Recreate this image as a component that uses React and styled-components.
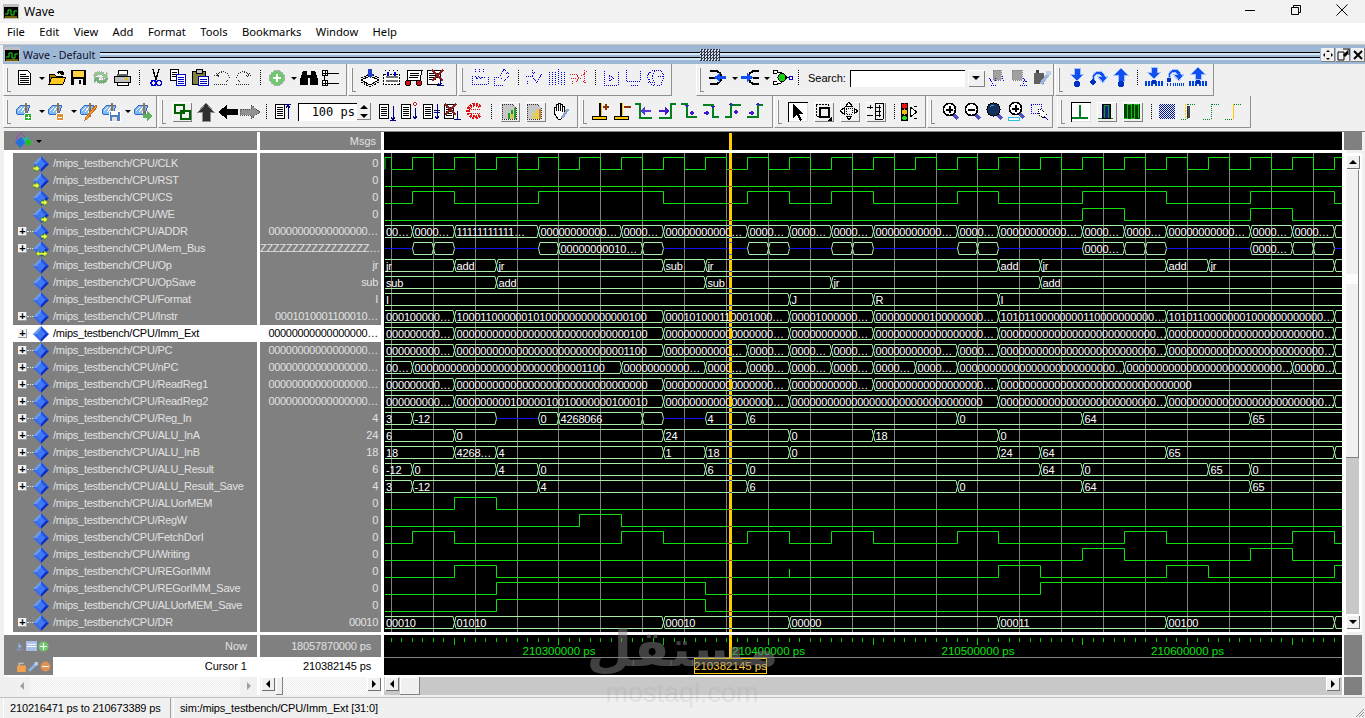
import React from 'react';
import styled, {createGlobalStyle} from 'styled-components';

const FONT = `"Liberation Sans", Arial, sans-serif`;
const UI_FONT = `"Noto Sans", "Open Sans", sans-serif`;

const Global = createGlobalStyle`
	html, body {
		margin: 0;
		padding: 0;
		background: #f0f0f0;
		overflow: hidden;
	}
`;

/* ---------- wave data, t is in half clock periods ---------- */

const END = 45.3;
const START = -0.3;
const tx = t => 391.35 + 20.95 * t;
const px = t => Math.floor(tx(t)) + 0.5;
const z = n => '0'.repeat(n) + '…';
const Z32 = '0'.repeat(32);

const clock = [];
for (let t = -1; t < 46; t += 2) {
	clock.push([Math.max(t, START), Math.min(t + 1, END)]);
}

const SIGNALS = [
	{name: 'CLK', value: '0', dir: 'in', high: clock},
	{name: 'RST', value: '0', dir: 'in', high: []},
	{name: 'CS', value: '0', dir: 'out', high: [[1, 3], [7, 13], [17, 19], [21, 23], [27, 29], [33, 37], [41, 45]]},
	{name: 'WE', value: '0', dir: 'out', high: [[33, 35], [41, 43]]},
	{name: 'ADDR', value: z(17), dir: 'out', open: true, bus: [
		[START, 1, z(2)], [1, 3, z(4)], [3, 7, '11111111111…'], [7, 11, z(11)], [11, 13, z(4)], [13, 17, z(11)],
		[17, 19, z(4)], [19, 21, z(4)], [21, 23, z(4)], [23, 27, z(11)], [27, 29, z(4)], [29, 33, z(11)],
		[33, 35, z(4)], [35, 37, z(4)], [37, 41, z(11)], [41, 43, z(4)], [43, 45, z(4)], [45, END, '']
	]},
	{name: 'Mem_Bus', value: 'ZZZZZZZZZZZZZZZZZ…', dir: 'both', open: true, bus: [
		[START, 1, null], [1, 2, ''], [2, 3, ''], [3, 7, null], [7, 8, ''], [8, 12, '00000000010…'], [12, 13, ''],
		[13, 17, null], [17, 18, ''], [18, 19, ''], [19, 21, null], [21, 22, ''], [22, 23, ''], [23, 27, null],
		[27, 28, ''], [28, 29, ''], [29, 33, null], [33, 35, z(4)], [35, 36, ''], [36, 37, ''], [37, 41, null],
		[41, 43, z(4)], [43, 44, ''], [44, 45, ''], [45, END, null]
	]},
	{name: 'Op', value: 'jr', bus: [
		[START, 3, 'jr'], [3, 5, 'add'], [5, 13, 'jr'], [13, 15, 'sub'], [15, 29, 'jr'], [29, 31, 'add'],
		[31, 37, 'jr'], [37, 39, 'add'], [39, 45, 'jr'], [45, END, '']
	]},
	{name: 'OpSave', value: 'sub', bus: [
		[START, 5, 'sub'], [5, 15, 'add'], [15, 21, 'sub'], [21, 31, 'jr'], [31, END, 'add']
	]},
	{name: 'Format', value: 'I', bus: [
		[START, 19, 'I'], [19, 23, 'J'], [23, 29, 'R'], [29, END, 'I']
	]},
	{name: 'Instr', value: '0001010001100010…', open: true, bus: [
		[START, 3, '000100000…'], [3, 13, '10001100000010100000000000000100'], [13, 19, '000101000110001000…'],
		[19, 23, '00001000000…'], [23, 29, '000000000100000000…'], [29, 37, '10101100000000110000000000…'],
		[37, 45, '10101100000001000000000000…'], [45, END, '']
	]},
	{name: 'Imm_Ext', value: z(17), open: true, bus: [
		[START, 3, z(9)], [3, 13, '00000000000000000000000000000100'], [13, 19, z(18)], [19, 23, z(11)],
		[23, 29, z(18)], [29, 37, z(26)], [37, 45, z(26)], [45, END, '']
	]},
	{name: 'PC', value: z(17), open: true, bus: [
		[START, 3, z(9)], [3, 13, '00000000000000000000000000001100'], [13, 17, z(11)], [17, 19, z(4)],
		[19, 21, z(4)], [21, 23, z(4)], [23, 27, z(11)], [27, 29, z(4)], [29, 37, z(26)], [37, 45, z(26)], [45, END, '']
	]},
	{name: 'nPC', value: z(17), open: true, bus: [
		[START, 1, z(2)], [1, 11, '00000000000000000000000000001100'], [11, 15, z(11)], [15, 17, z(4)],
		[17, 19, z(4)], [19, 21, z(4)], [21, 23, z(4)], [23, 25, z(4)], [25, 27, z(4)], [27, 35, z(26)],
		[35, 43, z(26)], [43, 45, z(5)], [45, END, '']
	]},
	{name: 'ReadReg1', value: z(17), open: true, bus: [
		[START, 3, z(9)], [3, 13, Z32], [13, 19, z(18)], [19, 23, z(11)], [23, 29, z(18)], [29, END, Z32]
	]},
	{name: 'ReadReg2', value: z(17), open: true, bus: [
		[START, 3, z(9)], [3, 13, '00000000010000010010000000100010'], [13, 19, z(18)], [19, 29, Z32],
		[29, 37, z(26)], [37, 45, z(26)], [45, END, '']
	]},
	{name: 'Reg_In', value: '4', open: true, bus: [
		[START, 1, '3'], [1, 5, '-12'], [5, 7, null], [7, 8, '0'], [8, 12, '4268066'], [12, 13, ''], [13, 15, null],
		[15, 17, '4'], [17, 27, '6'], [27, 33, '0'], [33, 41, '64'], [41, END, '65']
	]},
	{name: 'ALU_InA', value: '24', open: true, bus: [
		[START, 3, '6'], [3, 13, '0'], [13, 19, '24'], [19, 23, '0'], [23, 29, '18'], [29, END, '0']
	]},
	{name: 'ALU_InB', value: '18', open: true, bus: [
		[START, 3, '18'], [3, 5, '4268…'], [5, 13, '4'], [13, 15, '1'], [15, 19, '18'], [19, 29, '0'],
		[29, 31, '24'], [31, 37, '64'], [37, 45, '65'], [45, END, '']
	]},
	{name: 'ALU_Result', value: '6', open: true, bus: [
		[START, 1, '-12'], [1, 5, '0'], [5, 7, '4'], [7, 15, '0'], [15, 17, '6'], [17, 31, '0'], [31, 33, '64'],
		[33, 39, '0'], [39, 41, '65'], [41, END, '0']
	]},
	{name: 'ALU_Result_Save', value: '4', open: true, bus: [
		[START, 1, '3'], [1, 7, '-12'], [7, 17, '4'], [17, 27, '6'], [27, 33, '0'], [33, 41, '64'], [41, END, '65']
	]},
	{name: 'ALUorMEM', value: '0', high: [[3, 5]]},
	{name: 'RegW', value: '0', high: [[9, 11]]},
	{name: 'FetchDorI', value: '0', high: [[1, 3], [11, 13], [17, 19], [21, 23], [27, 29], [35, 37], [43, 45]]},
	{name: 'Writing', value: '0', high: [[33, 35], [41, 43]]},
	{name: 'REGorIMM', value: '0', spike: 19, high: [[3, 5], [29, 31], [37, 39], [45, END]]},
	{name: 'REGorIMM_Save', value: '0', high: [[5, 15], [31, END]]},
	{name: 'ALUorMEM_Save', value: '0', high: [[5, 15]]},
	{name: 'DR', value: '00010', open: true, bus: [
		[START, 3, '00010'], [3, 13, '01010'], [13, 19, '00010'], [19, 29, '00000'], [29, 37, '00011'],
		[37, 45, '00100'], [45, END, '']
	]}
];

const rowY = i => 163 + 17 * i;
const GRID_T = [];
for (let t = 0; t <= 44; t += 2) {
	GRID_T.push(t);
}
const CURSOR_X = 729;
const CURSOR_T = 16.2;

/* ---------- wave drawing ---------- */

function digitalPath(high, c) {
	const lo = c + 6.5;
	const hi = c - 5.5;
	let d = `M${Math.floor(tx(START))} ${lo}`;
	high.forEach(([a, b]) => {
		const xa = a <= START ? Math.floor(tx(START)) : px(a);
		const xb = b >= END ? 1342 : px(b);
		d += `L${xa} ${lo}L${xa} ${hi}L${xb} ${hi}`;
		if (b < END) {
			d += `L${xb} ${lo}`;
		}
	});
	if (!high.length || high[high.length - 1][1] < END) {
		d += `L1342 ${lo}`;
	}
	return d;
}

function busPath(a, b, c) {
	const top = c - 5.5;
	const bot = c + 6.5;
	const mid = c + 0.5;
	const xa = a <= START ? 385 : px(a);
	const xb = b >= END ? 1342 : px(b);
	const left = a <= START ? `M${xa} ${top}` : `M${xa} ${mid}L${xa + 1.5} ${top}`;
	const right = b >= END ? `L${xb} ${top}M${xb} ${bot}` : `L${xb - 1.5} ${top}L${xb} ${mid}L${xb - 1.5} ${bot}`;
	const close = a <= START ? `L${xa} ${bot}` : `L${xa + 1.5} ${bot}L${xa} ${mid}`;
	return left + right + close;
}

const Signal = ({signal, index}) => {
	const c = rowY(index);
	if (signal.bus) {
		return (
			<g>
				{signal.bus.map(([a, b, text]) => (text === null ? (
					<BlueLine key={a} d={`M${a <= START ? 385 : px(a)} ${c + 0.5}L${b >= END ? 1342 : px(b)} ${c + 0.5}`}/>
				) : (
					<g key={a}>
						<BusLine d={busPath(a, b, c)}/>
						{text ? <BusText x={(a <= START ? 384 : px(a)) + 2} y={c + 5}>{text}</BusText> : null}
					</g>
				)))}
			</g>
		);
	}
	return (
		<g>
			<DigitalLine d={digitalPath(signal.high, c)}/>
			{signal.spike ? <DigitalLine d={`M${px(signal.spike)} ${c + 6}V${c - 2}`}/> : null}
		</g>
	);
};

/* little marks where the signals cross the cursor */
const CursorMarks = () => (
	<g>
		{SIGNALS.map((s, i) => {
			const c = rowY(i);
			if (s.bus) {
				return (
					<g key={s.name}>
						<rect x={CURSOR_X} y={c - 6} width="3" height="1" fill="#4060e0"/>
						<rect x={CURSOR_X} y={c + 6} width="3" height="1" fill="#4060e0"/>
					</g>
				);
			}
			const on = s.high.some(([a, b]) => a <= CURSOR_T && CURSOR_T < b);
			return <rect key={s.name} x={CURSOR_X} y={on ? c - 6 : c + 6} width="3" height="1" fill="#f02020"/>;
		})}
	</g>
);

const Ticks = () => {
	const marks = [];
	for (let n = -1; n < 92; n++) {
		const t = n / 2;
		const major = n % 10 === 6;
		marks.push(<rect key={n} x={Math.floor(tx(t))} y="638" width="1" height={major ? 7 : 4} fill="#00d000"/>);
	}
	return marks;
};

/* ---------- toolbar icons ---------- */

const dot = {fill: 'none', stroke: '#0000e0', strokeDasharray: '1 1'};
const grayDot = {fill: 'none', stroke: '#303030', strokeDasharray: '1 1'};

const WaveBase = () => (
	<>
		<path d="M2 9l5-5h9l-3 9H3z" fill="#80b8f0" stroke="#2a6ad0"/>
		<path d="M4 10l4-4M7 11l4-5M10 12l3-5" stroke="#fff"/>
		<path d="M12 2v14" stroke="#a07030" strokeWidth="2"/>
	</>
);

const Lines = ({x = 0}) => (
	<>
		<path d={`M${x + 3.5} 3.5h9v14h-9z`} fill="#fff" stroke="#000"/>
		<path d={`M${x + 5} 6h6M${x + 5} 8h6M${x + 5} 10h6M${x + 5} 12h6M${x + 5} 14h6`} stroke="#000"/>
	</>
);

const Glass = ({inner}) => (
	<>
		<path d="M12 13l5 5" stroke="#5050c0" strokeWidth="3"/>
		<circle cx="8.5" cy="8.5" r="6" fill="#fff" stroke="#000" strokeWidth="1.6"/>
		{inner}
	</>
);

const ICONS = {
	doc: (
		<>
			<path d="M4.5 3.5h9l3 3v11h-12z" fill="#fff" stroke="#000"/>
			<path d="M6 7h6M6 9h9M6 11h9M6 13h9M6 15h9" stroke="#000"/>
		</>
	),
	open: (
		<>
			<path d="M3 17V7h5l2 2h6v8z" fill="#b08000" stroke="#000"/>
			<path d="M3 17l3-7h14l-3 7z" fill="#ffc820" stroke="#000"/>
			<path d="M11 5c2-2 5-2 6 0l1-1v4h-4l1-1c-1-1-2-1-3 0" fill="#000"/>
		</>
	),
	save: (
		<>
			<rect x="3" y="3" width="15" height="15" fill="#000"/>
			<rect x="5" y="4" width="11" height="6" fill="#ffd040"/>
			<rect x="6" y="12" width="9" height="6" fill="#f0f0f0"/>
			<rect x="11" y="13" width="2" height="4" fill="#000"/>
		</>
	),
	reload: (
		<>
			<path d="M3 9c2-5 9-6 12-2l2-2v6h-6l2-2c-2-2-6-2-8 2z" fill="#90c890" stroke="#b0b0b0" strokeDasharray="1 1"/>
			<path d="M18 12c-2 5-9 6-12 2l-2 2v-6h6l-2 2c2 2 6 2 8-2z" fill="#70b070" stroke="#b0b0b0" strokeDasharray="1 1"/>
		</>
	),
	print: (
		<>
			<path d="M6 3.5h9v5H6z" fill="#fff" stroke="#000"/>
			<path d="M2.5 9.5h16v6h-16z" fill="#c0c0c0" stroke="#000"/>
			<path d="M5 15.5h11v3H5z" fill="#fff" stroke="#000"/>
			<path d="M5 7h11v2H5z" fill="#606060"/>
			<rect x="13" y="11" width="3" height="2" fill="#e0c020"/>
		</>
	),
	cut: (
		<>
			<path d="M8 2l3 11M14 2l-3 11" stroke="#000" strokeWidth="1.4" fill="none"/>
			<circle cx="8.5" cy="16" r="2.5" fill="none" stroke="#0000d0" strokeWidth="1.4"/>
			<circle cx="14" cy="16" r="2.5" fill="none" stroke="#0000d0" strokeWidth="1.4"/>
		</>
	),
	copy: (
		<>
			<path d="M3.5 2.5h8v11h-8z" fill="#fff" stroke="#000"/>
			<path d="M5 5h5M5 7h5M5 9h5" stroke="#000"/>
			<path d="M9.5 7.5h9v11h-9z" fill="#fff" stroke="#0000c0"/>
			<path d="M11 10h6M11 12h6M11 14h6M11 16h6" stroke="#0000c0"/>
		</>
	),
	paste: (
		<>
			<path d="M3.5 4.5h13v13h-13z" fill="#808040" stroke="#000"/>
			<path d="M7 2.5h6v4H7z" fill="#c0c0c0" stroke="#000"/>
			<path d="M9.5 9.5h10v9h-10z" fill="#fff" stroke="#0000c0"/>
			<path d="M11 12h7M11 14h7M11 16h7" stroke="#0000c0"/>
		</>
	),
	undo: (
		<>
			<path d="M6 9c1-5 10-6 12 0 1 3-1 5-3 6" {...grayDot}/>
			<path d="M3 8h6M5 6l3 4M3 17h14" {...grayDot}/>
		</>
	),
	redo: (
		<>
			<path d="M16 9c-1-5-10-6-12 0-1 3 1 5 3 6" {...grayDot}/>
			<path d="M13 8h6M17 6l-3 4M3 17h14" {...grayDot}/>
		</>
	),
	add: (
		<>
			<circle cx="11" cy="11" r="7.5" fill="#70c870" stroke="#b0b0b0"/>
			<path d="M11 7v8M7 11h8" stroke="#fff" strokeWidth="2.4"/>
		</>
	),
	find: (
		<>
			<path d="M3 9l2-5h4v10H3zM19 9l-2-5h-4v10h6z" fill="#000"/>
			<rect x="2" y="11" width="8" height="7" fill="#000"/>
			<rect x="12" y="11" width="8" height="7" fill="#000"/>
			<rect x="9" y="8" width="4" height="3" fill="#000"/>
		</>
	),
	tree: (
		<>
			<path d="M2.5 3.5h5v5h-5zM2.5 13.5h5v5h-5z" fill="#fff" stroke="#000"/>
			<path d="M3 6h4M5 4v4M3 16h4M5 14v4M8 6h11M8 16h11M4 9v4" stroke="#000"/>
		</>
	),
	stack: (
		<>
			<path d="M2 13l9-4 9 4-9 5z" fill="#fff" stroke="#000"/>
			<path d="M2 15l9 5 9-5M2 11l9-4 9 4" fill="none" stroke="#000" strokeDasharray="2 1"/>
			<path d="M9 2h4v5h2l-4 4-4-4h2z" fill="#2040d0"/>
		</>
	),
	grid: (
		<>
			<path d="M2.5 7.5h16v10h-16z" fill="#fff" stroke="#000" strokeDasharray="2 1"/>
			<path d="M4 3v1M8 3v1M12 3v1M16 3v1" stroke="#000"/>
			<path d="M5 9h12v2H5zM5 13h12v2H5z" fill="#000" opacity=".55"/>
			<path d="M7 5v4M14 5v4" stroke="#0000d0" strokeWidth="2"/>
		</>
	),
	car: (
		<>
			<path d="M5 3.5h14l-2 10H4z" fill="#fff" stroke="#000"/>
			<path d="M7 6h9M7 8h9M6 10h9" stroke="#000"/>
			<circle cx="5" cy="16" r="2.6" fill="#d01010" stroke="#000"/>
			<circle cx="16" cy="16" r="2.6" fill="#d01010" stroke="#000"/>
		</>
	),
	docx: (
		<>
			<path d="M2.5 3.5h13v14h-13z" fill="#fff" stroke="#000"/>
			<path d="M4 6h9M4 8h9M4 10h9M4 12h7" stroke="#000"/>
			<path d="M7 3l11 11M18 3L7 14" stroke="#902020" strokeWidth="2.4"/>
			<path d="M15 12v6M12 18h7M13 16l2 2 2-2" stroke="#000080" fill="none"/>
		</>
	),
	blue1: <path d="M6 2v3M10 2v3M14 2v3M3 9v8h16V9M6 9l2 3 2-3 2 3 2-3 2 3" {...dot}/>,
	blue2: <path d="M3 10v8h9M3 10h6M13 2l6 6-6 6-4-4zM15 6l4 0" {...dot}/>,
	blue3: <path d="M2 9h6l3-5M8 9l3 5 3-3M18 7l-6 9M3 14v4M8 3v3" {...dot}/>,
	blue4: <path d="M3 5v13M6 5v13M9 5v13M12 2v16M15 5v13M18 5v13" {...dot}/>,
	blue5: <path d="M2 7h6l3 4 8-7M3 11h6M8 15l3-4 7 5M4 14v4M16 3v12" {...{...dot, stroke: '#d02020'}}/>,
	blue6: <path d="M3 4v14h14V4M8 8l5 3-5 3z" {...dot}/>,
	blue7: <path d="M3 3v11h14V3M8 18h8" {...dot}/>,
	blue8: <path d="M2 9l5-6h3l-3 6 3 9H7zM11 3h5l3 6-3 9h-5M13 9h6M3 15h6" {...dot}/>,
	combL: (
		<>
			<path d="M3 4h5a6 6 0 0 1 0 13H3M10 10.5h-8" fill="none" stroke="#000" strokeWidth="2"/>
			<path d="M19 9h-6V6l-6 4.5 6 4.5v-3h6z" fill="#1050f0"/>
		</>
	),
	combR: (
		<>
			<path d="M20 4h-4a6 6 0 0 0 0 13h4M14 10.5h6" fill="none" stroke="#000" strokeWidth="2"/>
			<path d="M2 9h6V6l6 4.5L8 15v-3H2z" fill="#1050f0"/>
		</>
	),
	chip: (
		<>
			<path d="M2.5 3.5h4v3h-4zM2.5 14.5h4v3h-4z" fill="#fff" stroke="#000"/>
			<path d="M6 5h4l6 5.5-6 5.5H6" fill="#fff" stroke="#000"/>
			<circle cx="11" cy="10.5" r="4" fill="#10d010" stroke="#000"/>
			<path d="M16 10.5h3" stroke="#000"/>
			<rect x="18" y="9" width="3" height="3" fill="#fff" stroke="#0000d0"/>
		</>
	),
	find2: (
		<>
			<path d="M6 3h8v10H6z" fill="#a0a0a0" stroke="#808080" strokeDasharray="1 1"/>
			<path d="M2 11l4 6M4 18h6M8 11v4" {...dot}/>
			<path d="M15 9l2 6" {...dot}/>
		</>
	),
	find3: (
		<>
			<path d="M3 3h10v10H3z" fill="#a0a0a0" stroke="#808080" strokeDasharray="1 1"/>
			<path d="M14 11l5 6M11 18h7M14 17v-3" {...dot}/>
		</>
	),
	tools: (
		<>
			<path d="M3 6h10v11H3z" fill="#606060"/>
			<path d="M5 3h3v3H5z" fill="#404040"/>
			<path d="M18 6l-8 11" stroke="#a0b8e0" strokeWidth="3.4"/>
			<path d="M15 4h5v4h-5z" fill="#c0d0e8"/>
		</>
	),
	down: (
		<>
			<path d="M8 1h6v6h4l-7 7-7-7h4z" fill="#1050f0" stroke="#a0c0ff"/>
			<circle cx="11" cy="17" r="3" fill="#0030c0"/>
		</>
	),
	over: (
		<>
			<path d="M4 12c0-9 11-10 13-3h3l-5 7-6-7h4c-2-3-7-2-7 3z" fill="#1050f0" stroke="#a0c0ff"/>
			<circle cx="5" cy="15" r="2.6" fill="#0030c0"/>
		</>
	),
	up: (
		<>
			<path d="M11 1l7 7h-4v6H8V8H4z" fill="#1050f0" stroke="#a0c0ff"/>
			<circle cx="11" cy="17" r="3" fill="#0030c0"/>
		</>
	),
	downB: (
		<>
			<path d="M8 0h6v5h4l-7 7-7-7h4z" fill="#1050f0" stroke="#a0c0ff"/>
			<path d="M3 14v5M6 14v5M9 14v5M13 14v5M16 14v5M19 14v5" stroke="#0040e0" strokeWidth="1.4"/>
			<circle cx="11" cy="15" r="2.4" fill="#0030c0"/>
		</>
	),
	overB: (
		<>
			<path d="M3 10c0-9 11-10 13-3h3l-5 7-6-7h4c-2-3-7-2-7 3z" fill="#1050f0" stroke="#a0c0ff"/>
			<circle cx="4" cy="13" r="2.4" fill="#0030c0"/>
			<path d="M2 16v3M5 16v3M8 16v3M10 16v3M12 16v3M14 16v3M16 16v3M18 16v3" stroke="#0040e0"/>
		</>
	),
	upB: (
		<>
			<path d="M11 0l7 7h-4v5H8V7H4z" fill="#1050f0" stroke="#a0c0ff"/>
			<path d="M3 14v5M6 14v5M9 14v5M13 14v5M16 14v5M19 14v5" stroke="#0040e0" strokeWidth="1.4"/>
			<circle cx="11" cy="15" r="2.4" fill="#0030c0"/>
		</>
	),
	waveAdd: (
		<>
			<WaveBase/>
			<circle cx="14" cy="16" r="4" fill="#30b030" stroke="#fff"/>
			<path d="M12 16h4M14 14v4" stroke="#fff"/>
		</>
	),
	waveDel: (
		<>
			<WaveBase/>
			<circle cx="14" cy="16" r="4" fill="#e09030" stroke="#fff"/>
			<path d="M12 16h4" stroke="#fff"/>
		</>
	),
	waveEdit: (
		<>
			<WaveBase/>
			<path d="M19 6L9 18l-2 1 1-3L18 4z" fill="#f0a040" stroke="#c07020"/>
		</>
	),
	waveSave: (
		<>
			<WaveBase/>
			<rect x="9" y="10" width="11" height="10" fill="#5080c0" stroke="#fff"/>
			<rect x="11" y="11" width="7" height="3" fill="#fff"/>
			<rect x="12" y="16" width="5" height="4" fill="#e0e0e0"/>
		</>
	),
	waveOut: (
		<>
			<WaveBase/>
			<path d="M11 13h4v-3l5 5-5 5v-3h-4z" fill="#60b060"/>
		</>
	),
	link: <path d="M3.5 3.5h9v8h-9zM9.5 9.5h9v8h-9z" fill="none" stroke="#006000" strokeWidth="2"/>,
	arrowUp: <path d="M11 2l8 9h-4v9H7v-9H3z" fill="#303030" stroke="#909090"/>,
	arrowLeft: <path d="M1 11l9-7v4h11v6H10v4z" fill="#000"/>,
	arrowRight: <path d="M21 11l-9-7v4H1v6h11v4z" fill="#909090" stroke="#505050" strokeDasharray="1 1"/>,
	listSpace: (
		<>
			<Lines/>
			<path d="M16 3v15M13 3h6M14 7l2-3 2 3" stroke="#000080" fill="none"/>
		</>
	),
	listDown: (
		<>
			<Lines/>
			<path d="M17 5v14M14 19h6M15 16l2 3 2-3" stroke="#000080" fill="none"/>
		</>
	),
	listRed: (
		<>
			<Lines/>
			<path d="M17 7v11M15 15l2 3 2-3" stroke="#000080" fill="none"/>
			<path d="M17 1l2 2-2 2-2-2z" fill="#fff" stroke="#d01010"/>
		</>
	),
	listBoth: (
		<>
			<Lines/>
			<path d="M17 3v15M15 15l2 3 2-3M14 9h6M14 11h6" stroke="#000080" fill="none"/>
		</>
	),
	listX: (
		<>
			<Lines x={-1}/>
			<path d="M3 3l11 11M14 3L3 14" stroke="#902020" strokeWidth="2.4"/>
			<path d="M15 10v8M12 18h7" stroke="#000080"/>
		</>
	),
	redC: (
		<>
			<path d="M16 6c-2-4-12-3-12 4s10 8 12 4" fill="none" stroke="#e01010" strokeWidth="3.6" strokeDasharray="2 1"/>
			<path d="M5 8h12M5 12h12" stroke="#e01010" strokeDasharray="1 1"/>
		</>
	),
	chartA: (
		<>
			<path d="M3 3h10l4 4v11H3z" fill="#c8c8c8" stroke="#303030" strokeDasharray="1 1"/>
			<path d="M10 18v-6M13 18V9M16 18V7" stroke="#20a020" strokeWidth="2"/>
			<path d="M13 13v5" stroke="#e0c020" strokeWidth="2"/>
		</>
	),
	chartB: (
		<>
			<path d="M2 3h11l3 4v11H2z" fill="#c8c8c8" stroke="#303030" strokeDasharray="1 1"/>
			<path d="M9 18v-6M12 18V9" stroke="#f0d020" strokeWidth="2"/>
			<path d="M15 18V8" stroke="#d08020" strokeWidth="2"/>
		</>
	),
	hand: (
		<>
			<path d="M5 12V6h2V3h2v-1h2v1h2v2h2v8l-3 5H9z" fill="#fff" stroke="#000"/>
			<path d="M7 6v4M9 3v7M11 3v7M13 5v6" stroke="#000"/>
			<path d="M19 8l-6 9" stroke="#90a8d0" strokeWidth="3"/>
		</>
	),
	cursorAdd: (
		<>
			<path d="M10 2v13" stroke="#000" strokeWidth="1.6"/>
			<path d="M2.5 15.5h14v3h-14z" fill="#ffc800" stroke="#000"/>
			<path d="M11 2v12" stroke="#ffc800"/>
			<path d="M13 6h6M16 3v6" stroke="#903000" strokeWidth="1.4"/>
		</>
	),
	cursorDel: (
		<>
			<path d="M9 2v13" stroke="#000" strokeWidth="1.6"/>
			<path d="M2.5 15.5h14v3h-14z" fill="#ffc800" stroke="#000"/>
			<path d="M10 2v12" stroke="#ffc800"/>
			<path d="M12 6h7" stroke="#903000" strokeWidth="1.4"/>
		</>
	),
	edgeA: (
		<>
			<path d="M1 3h5v14h12" fill="none" stroke="#008020" strokeWidth="1.4"/>
			<path d="M17 9h-6V6l-5 4 5 4v-3h6z" fill="#4018d0" opacity=".85"/>
		</>
	),
	edgeB: (
		<>
			<path d="M3 17h12V3h5" fill="none" stroke="#008020" strokeWidth="1.4"/>
			<path d="M3 9h6V6l5 4-5 4v-3H3z" fill="#4018d0"/>
		</>
	),
	edgeC: (
		<>
			<path d="M3 3h6v13h10" fill="none" stroke="#008020" strokeWidth="1.4"/>
			<path d="M7 4h4l-2 3zM17 12h-6l3-2zM17 12h-6l3 2z" fill="#4018d0"/>
		</>
	),
	edgeD: (
		<>
			<path d="M3 4h10v12h6" fill="none" stroke="#008020" strokeWidth="1.4"/>
			<path d="M11 5h4l-2 3zM3 12h7l-3-2zM3 12h7l-3 2z" fill="#4018d0"/>
		</>
	),
	edgeE: (
		<>
			<path d="M3 16h6V4h10" fill="none" stroke="#008020" strokeWidth="1.4"/>
			<path d="M7 4h4l-2-3zM17 11h-6l3-2zM17 11h-6l3 2z" fill="#4018d0"/>
		</>
	),
	edgeF: (
		<>
			<path d="M3 16h11V4h5" fill="none" stroke="#008020" strokeWidth="1.4"/>
			<path d="M12 4h4l-2-3zM4 12h7l-3-2zM4 12h7l-3 2z" fill="#4018d0"/>
		</>
	),
	pointer: <path d="M6 3v14l4-3 3 6 2-1-3-6h5z" fill="#000"/>,
	square: (
		<>
			<path d="M3 3h12v12H3z" fill="none" stroke="#000" strokeDasharray="2 1"/>
			<path d="M6.5 6.5h9v9h-9z" fill="none" stroke="#000" strokeWidth="2"/>
			<path d="M14 20l5-5v5z" fill="#000"/>
		</>
	),
	move: (
		<>
			<path d="M10 1l3 4H7zM10 19l3-4H7zM1 10l4-3v6zM19 10l-4-3v6z" fill="#fff" stroke="#000"/>
			<path d="M7 7h6v6H7z" fill="none" stroke="#000" strokeDasharray="1 1"/>
		</>
	),
	measure: (
		<>
			<path d="M10 2v16M18 2v16M10 2h8M10 18h8" stroke="#000" fill="none"/>
			<path d="M2 6h6M5 4v4M2 14h6M11 6h5M11 10h5M11 14h5M14 4v4M14 8v4M14 12v4" stroke="#000"/>
		</>
	),
	traffic: (
		<>
			<rect x="1" y="2" width="7" height="18" fill="#000"/>
			<circle cx="4.5" cy="5" r="2.6" fill="#f01010"/>
			<circle cx="4.5" cy="11" r="2.6" fill="#f0c010"/>
			<circle cx="4.5" cy="17" r="2.4" fill="#20e020"/>
			<path d="M10 6v10l7-5z" fill="#fff" stroke="#000"/>
			<path d="M14 5h3M14 17h3" stroke="#000"/>
		</>
	),
	zoomIn: <Glass inner={<path d="M5 8.5h7M8.5 5v7" stroke="#000" strokeWidth="2"/>}/>,
	zoomOut: <Glass inner={<path d="M5 8.5h7" stroke="#000" strokeWidth="2"/>}/>,
	zoomFull: (
		<>
			<path d="M12 13l5 5" stroke="#5050c0" strokeWidth="3"/>
			<circle cx="8.5" cy="8.5" r="6.6" fill="#103060" stroke="#000"/>
			<path d="M5 6c1-2 3-2 4-2" stroke="#6090d0" fill="none"/>
		</>
	),
	zoomCur: (
		<>
			<path d="M12 12l5 5" stroke="#5050c0" strokeWidth="3"/>
			<circle cx="8.5" cy="7.5" r="6" fill="#fff" stroke="#000" strokeWidth="1.6"/>
			<path d="M5 7.5h7M8.5 4v7" stroke="#000" strokeWidth="2"/>
			<rect x="1.5" y="16.5" width="11" height="3" fill="#fff" stroke="#30c0e0"/>
		</>
	),
	zoomArea: (
		<>
			<path d="M2 3h10v9H2z" {...dot}/>
			<path d="M9 8l4 1 5 5-3 3-4-2-2-5z" fill="#fff" stroke="#000" strokeDasharray="1 1"/>
			<path d="M15 15l4 4" stroke="#0000d0"/>
		</>
	),
	pulse: <path d="M2 17h16M10 17V4" stroke="#008020" strokeWidth="1.4" fill="none"/>,
	pulseBlue: (
		<>
			<path d="M2 17h15" stroke="#008020"/>
			<rect x="6" y="3" width="8" height="14" fill="#102080" stroke="#000"/>
			<path d="M8 17V4h4v13" stroke="#10a010" fill="none"/>
		</>
	),
	pulseGreen: (
		<>
			<rect x="2" y="3" width="16" height="15" fill="#004000"/>
			<path d="M2 17h3V3h4v14h3V3h4v14" stroke="#10c010" fill="none"/>
		</>
	),
	dither: (
		<>
			<pattern id="dith" width="2" height="2" patternUnits="userSpaceOnUse">
				<rect width="2" height="2" fill="#e8f0e8"/>
				<rect width="1" height="1" fill="#0010a0"/>
				<rect x="1" y="1" width="1" height="1" fill="#0010a0"/>
			</pattern>
			<rect x="2" y="3" width="16" height="15" fill="url(#dith)"/>
		</>
	),
	stepA: (
		<>
			<path d="M2 18h6V3h8" stroke="#008020" fill="none" strokeDasharray="1 1"/>
			<path d="M6 3v15" stroke="#ffc800" strokeDasharray="2 1"/>
			<path d="M8 5h3v12H8z" fill="#000" opacity=".7"/>
		</>
	),
	stepB: <path d="M2 18h8V3h8" stroke="#008020" fill="none" strokeDasharray="1 1"/>,
	stepC: (
		<>
			<path d="M2 18h8V3h8" stroke="#008020" fill="none" strokeDasharray="1 1"/>
			<path d="M10 3v15" stroke="#ffc800"/>
		</>
	)
};

const Icon = ({name}) => (
	<IconBox viewBox="0 0 22 22">{ICONS[name]}</IconBox>
);

/* tool items: d dropdown, s separator, r: raised button, u: sunken button, the rest plain icons */
const Tools = ({items}) => items.map((item, k) => {
	const key = `${item}-${k}`;
	if (item === 'd') {
		return <DropMark key={key}/>;
	}
	if (item === 's') {
		return <Sep key={key}/>;
	}
	if (item.startsWith('r:')) {
		return <ToolSlot key={key} $wide><RaisedBtn><Icon name={item.slice(2)}/></RaisedBtn></ToolSlot>;
	}
	if (item.startsWith('u:')) {
		return <ToolSlot key={key} $wide><SunkenBtn><Icon name={item.slice(2)}/></SunkenBtn></ToolSlot>;
	}
	return <ToolSlot key={key}><Icon name={item}/></ToolSlot>;
});

const MENU = ['File', 'Edit', 'View', 'Add', 'Format', 'Tools', 'Bookmarks', 'Window', 'Help'];

const AppLogo = () => (
	<LogoSvg viewBox="0 0 16 15">
		<rect width="16" height="15" fill="#c0c0c0"/>
		<rect x="1" y="3" width="14" height="11" fill="#000"/>
		<path d="M2 10h3V6h3v5h3V7h3" stroke="#20e020" fill="none"/>
		<path d="M2 13h12" stroke="#e0c000"/>
	</LogoSvg>
);

const SignalGlyph = ({dir}) => (
	<GlyphSvg viewBox="0 0 16 18">
		<path d="M8 1L0 9h8z" fill="#6a9cf0"/>
		<path d="M8 1l8 8H8z" fill="#1f50e8"/>
		<path d="M0 9l8 8V9z" fill="#3a6ae8"/>
		<path d="M16 9l-8 8V9z" fill="#0c2cc0"/>
		<path d="M8 4L3.5 9 8 14l4.5-5z" fill="#3f78f4"/>
		{dir === 'in' ? <path d="M0 12h3v-2l4 3.5L3 17v-2H0z" fill="#eef440" stroke="#208020" strokeWidth=".6"/> : null}
		{dir === 'out' ? <path d="M8 12h3v-2l4 3.5-4 3.5v-2H8z" fill="#eef440" stroke="#208020" strokeWidth=".6"/> : null}
		{dir === 'both' ? <path d="M3 13.5l3-3v2h5v-2l4 3-4 3.5v-2H6v2z" fill="#eef440" stroke="#208020" strokeWidth=".6"/> : null}
	</GlyphSvg>
);

const Arrow = ({dir, off}) => (
	<ArrowSvg viewBox="0 0 8 8" $off={off}>
		<path d={{left: 'M6 0v8L2 4z', right: 'M2 0v8l4-4z', up: 'M0 6h8L4 2z', down: 'M0 2h8L4 6z'}[dir]}/>
	</ArrowSvg>
);

export default function App() {
	return (
		<Shell>
			<Global/>
			<TitleBar>
				<AppLogo/>
				<TitleText>Wave</TitleText>
				<WinControls>
					<WinBtn viewBox="0 0 12 12"><path d="M1 6.5h10"/></WinBtn>
					<WinBtn viewBox="0 0 12 12"><path d="M1.5 3.5h7v7h-7zM3.5 3V1.5h7v7H9"/></WinBtn>
					<WinBtn viewBox="0 0 12 12"><path d="M.5.5l11 11M11.5.5l-11 11"/></WinBtn>
				</WinControls>
			</TitleBar>
			<MenuBar>
				{MENU.map(m => <MenuItem key={m}>{m}</MenuItem>)}
			</MenuBar>
			<Window>
				<WindowTitle>
					<AppLogo/>
					<WindowName>Wave - Default</WindowName>
					<Rails><Rail/><Rail/></Rails>
					<GripDots/>
					<Rails><Rail/><Rail/></Rails>
					<SmallBtn viewBox="0 0 14 14"><path d="M7 2l2 2H5zM7 12l2-2H5zM2 7l2-2v4zM12 7l-2-2v4z" fill="#000"/></SmallBtn>
					<SmallBtn viewBox="0 0 14 14"><path d="M7 1h6v6M2 4h6v8H2z" fill="none" stroke="#000"/><path d="M12 2L7 7l2 2 3-3z" fill="#000"/></SmallBtn>
					<SmallBtn viewBox="0 0 14 14"><path d="M3 3l8 8M11 3l-8 8" stroke="#000" strokeWidth="2"/></SmallBtn>
				</WindowTitle>
				<ToolRow $lift>
					<ToolGroup $w={344}><Tools items={['doc', 'd', 'open', 'save', 'reload', 'print', 's', 'cut', 'copy', 'paste', 'undo', 'redo', 's', 'add', 'd', 'find', 'tree']}/></ToolGroup>
					<ToolGroup $w={109}><Tools items={['stack', 'grid', 'car', 'docx']}/></ToolGroup>
					<ToolGroup $w={214}><Tools items={['blue1', 'blue2', 's', 'blue3', 'blue4', 'blue5', 's', 'blue6', 'blue7', 'blue8']}/></ToolGroup>
					<RowGap $w={22}/>
					<ToolGroup $w={358}>
						<Tools items={['combL', 'd', 'combR', 'd', 'chip', 's']}/>
						<SearchLabel>Search:</SearchLabel>
						<SearchField/>
						<ComboBtn><Arrow dir="down"/></ComboBtn>
						<Tools items={['find2', 'find3', 'tools']}/>
					</ToolGroup>
					<ToolGroup $w={159}><Tools items={['down', 'over', 'up', 's', 'downB', 'overB', 'upB']}/></ToolGroup>
				</ToolRow>
				<ToolRow>
					<ToolGroup $w={154}><Tools items={['waveAdd', 'd', 'waveDel', 'd', 'waveEdit', 'waveSave', 'd', 'waveOut']}/></ToolGroup>
					<ToolGroup $w={420}>
						<Tools items={['r:link', 'arrowUp', 'arrowLeft', 'arrowRight', 's', 'listSpace']}/>
						<StepField>100 ps</StepField>
						<Spinner><Arrow dir="up"/><Arrow dir="down"/></Spinner>
						<Tools items={['listDown', 'listRed', 'listBoth', 'listX', 'redC', 's', 'r:chartA', 'r:chartB', 'hand']}/>
					</ToolGroup>
					<ToolGroup $w={194}><Tools items={['cursorAdd', 'cursorDel', 'edgeA', 'edgeB', 'edgeC', 'edgeD', 'edgeE', 'edgeF']}/></ToolGroup>
					<ToolGroup $w={152}><Tools items={['u:pointer', 'r:square', 'r:move', 'r:measure', 's', 'traffic']}/></ToolGroup>
					<ToolGroup $w={126} $pad={13}><Tools items={['zoomIn', 'zoomOut', 'zoomFull', 'zoomCur', 'zoomArea']}/></ToolGroup>
					<RowGap $w={2}/>
					<ToolGroup $w={194}><Tools items={['u:pulse', 'r:pulseBlue', 'r:pulseGreen', 's', 'dither', 'stepA', 'stepB', 'stepC']}/></ToolGroup>
				</ToolRow>
				<Pane>
					<NameHead>
						<HeadGlyph viewBox="0 0 18 16">
							<path d="M7 0l5 5-5 5-5-5z" fill="none" stroke="#a040c0"/>
							<path d="M1 9l6-5 5 5-6 6z" fill="#2070e0"/>
							<path d="M9 6l4-3 4 5-4 5z" fill="#30b0a0"/>
							<rect x="12" y="7" width="5" height="5" fill="#20c020"/>
						</HeadGlyph>
						<DropMark/>
					</NameHead>
					<ValueHead>Msgs</ValueHead>
					<WaveHead viewBox="384 132 958 18">
						<rect x={CURSOR_X} y="133" width="3" height="17" fill="#ffcc00"/>
					</WaveHead>
					<SideHead/>

					<NameList>
						{SIGNALS.map(s => (
							<SignalRow key={s.name} $selected={s.name === 'Imm_Ext'}>
								{s.open ? <Expander>+</Expander> : null}
								<SignalGlyph dir={s.dir}/>
								<SignalName>/mips_testbench/CPU/{s.name}</SignalName>
							</SignalRow>
						))}
					</NameList>
					<ValueList>
						{SIGNALS.map(s => (
							<ValueRow key={s.name} $selected={s.name === 'Imm_Ext'}>{s.value}</ValueRow>
						))}
					</ValueList>
					<WaveCanvas viewBox="384 153 958 479">
						{GRID_T.map(t => <rect key={t} x={Math.floor(tx(t))} y="153" width="1" height="479" fill="#808080"/>)}
						{SIGNALS.map((s, i) => <Signal key={s.name} signal={s} index={i}/>)}
						<rect x={CURSOR_X} y="153" width="3" height="479" fill="#ffcc00"/>
						<CursorMarks/>
					</WaveCanvas>
					<VScroll>
						<ScrollBtn><Arrow dir="up"/></ScrollBtn>
						<VThumb/>
						<VTrack/>
						<ScrollBtn><Arrow dir="down"/></ScrollBtn>
					</VScroll>

					<NowCell>
						<MiniIcons>
							<MiniSvg viewBox="0 0 10 10"><path d="M1 8h8M4 2l3 3-3 2z" fill="#b0c8e8" stroke="#8098b8"/></MiniSvg>
							<MiniSvg viewBox="0 0 10 10"><rect width="10" height="9" fill="#a8c0e8"/><path d="M1 3h8M1 5h8" stroke="#fff"/></MiniSvg>
							<MiniSvg viewBox="0 0 10 10"><circle cx="5" cy="5" r="4.5" fill="#70c870"/><path d="M5 2v6M2 5h6" stroke="#fff"/></MiniSvg>
						</MiniIcons>
						<NowLabel>Now</NowLabel>
					</NowCell>
					<NowValue>18057870000 ps</NowValue>
					<WaveFoot viewBox="384 635 958 40">
						<Ticks/>
						<rect x="384" y="657" width="958" height="1" fill="#808080"/>
						<rect x={CURSOR_X} y="635" width="3" height="23" fill="#ffcc00"/>
						{[8, 18, 28, 38].map((t, k) => (
							<TimeLabel key={t} x={tx(t)} y="655">{`${2103 + k}00000 ps`}</TimeLabel>
						))}
						<rect x="694.5" y="658.5" width="72" height="15" fill="#000" stroke="#ffcc00"/>
						<CursorLabel x="730.5" y="670">210382145 ps</CursorLabel>
					</WaveFoot>
					<SideFoot/>

					<CursorCell>
						<MiniIcons $cursor>
							<MiniSvg viewBox="0 0 10 10"><path d="M1 4h8v6H1z" fill="#f0a050"/><path d="M3 4V2h4" fill="none" stroke="#d8d0c0"/></MiniSvg>
							<MiniSvg viewBox="0 0 10 10"><path d="M1 9l6-6" stroke="#90b0e0" strokeWidth="2.5"/><path d="M6 1h3v3H6z" fill="#c0d0e8"/></MiniSvg>
							<MiniSvg viewBox="0 0 10 10"><circle cx="5" cy="5" r="4.5" fill="#e09050"/><path d="M2 5h6" stroke="#fff"/></MiniSvg>
						</MiniIcons>
						<CursorName>Cursor 1</CursorName>
					</CursorCell>
					<CursorValue>210382145 ps</CursorValue>

					<NameScroll>
						<FlatBtn><Arrow dir="left" off/></FlatBtn>
						<Hatch/>
						<FlatBtn><Arrow dir="right" off/></FlatBtn>
					</NameScroll>
					<ValueScroll>
						<ScrollBtn><Arrow dir="left"/></ScrollBtn>
						<SmallThumb/>
						<Hatch/>
						<ScrollBtn><Arrow dir="right"/></ScrollBtn>
					</ValueScroll>
					<WaveScroll>
						<ScrollBtn><Arrow dir="left"/></ScrollBtn>
						<TrackPiece $w={1}/>
						<WaveThumb/>
						<TrackPiece/>
						<ScrollBtn><Arrow dir="right"/></ScrollBtn>
					</WaveScroll>
					<SideFootB/>
				</Pane>
			</Window>
			<StatusBar>
				<StatusPane $w={168}>210216471 ps to 210673389 ps</StatusPane>
				<StatusPane>sim:/mips_testbench/CPU/Imm_Ext [31:0]</StatusPane>
				<SizeGrip viewBox="0 0 10 10"><path d="M9 1L1 9M9 4L4 9M9 7L7 9" stroke="#909090"/></SizeGrip>
			</StatusBar>
			<Watermark>
				<WatermarkAr>مستقل</WatermarkAr>
				<WatermarkEn>mostaql.com</WatermarkEn>
			</Watermark>
		</Shell>
	);
}

/* ---------- styles ---------- */

const Shell = styled.div`
	position: relative;
	display: flex;
	flex-direction: column;
	width: 1365px;
	height: 718px;
	overflow: hidden;
	background: #f0f0f0;
	font-family: ${FONT};
	font-size: 12px;
	color: #000;
`;

const TitleBar = styled.div`
	display: flex;
	align-items: center;
	height: 23px;
	padding-left: 3px;
	background: #f2f2f2;
`;

const LogoSvg = styled.svg`
	width: 16px;
	height: 15px;
	flex: none;
`;

const TitleText = styled.span`
	margin-left: 5px;
	font-family: ${UI_FONT};
	font-size: 12px;
`;

const WinControls = styled.div`
	display: flex;
	margin: -3px 0 0 auto;
	align-items: center;
	gap: 34px;
	padding-right: 17px;
`;

const WinBtn = styled.svg`
	width: 12px;
	height: 12px;
	fill: none;
	stroke: #000;
`;

const MenuBar = styled.div`
	display: flex;
	align-items: center;
	height: 18px;
	padding-left: 7px;
	background: #fff;
	gap: 14.4px;
	font-family: ${UI_FONT};
	font-size: 11.2px;
`;

const MenuItem = styled.span`
	line-height: 18px;
`;

const Window = styled.div`
	display: flex;
	flex-direction: column;
	margin-top: 3px;
	padding-left: 1px;
	border-top: 1px solid #c8c8c8;
`;

const WindowTitle = styled.div`
	display: flex;
	align-items: center;
	height: 19px;
	margin-left: 2px;
	padding-left: 1px;
	background: #9db8d4;
`;

const WindowName = styled.span`
	margin: 0 5px 0 3px;
	font-family: ${UI_FONT};
	font-size: 10.6px;
	color: #101030;
	white-space: nowrap;
`;

const Rails = styled.div`
	flex: 1;
	display: flex;
	flex-direction: column;
	gap: 4px;
`;

const Rail = styled.div`
	height: 1px;
	background: #000;
	box-shadow: 0 1px 0 #d4e8fa, 0 2px 0 #d4e8fa;
`;

const GripDots = styled.div`
	width: 20px;
	height: 12px;
	background: repeating-conic-gradient(#334 0 25%, #cfe0f0 0 50%) 0 0 / 3px 3px;
`;

const SmallBtn = styled.svg`
	width: 14px;
	height: 14px;
	margin-left: 1px;
	background: #f0f0f0;
	box-shadow: inset -1px -1px 0 #808080;
	&:first-of-type {
		margin-left: 4px;
	}
`;

const ToolRow = styled.div`
	display: flex;
	height: 32px;
	margin-left: 2px;
	gap: 1px;
	& > div {
		padding-bottom: ${p => (p.$lift ? 3 : 0)}px;
	}
`;

const RowGap = styled.div`
	width: ${p => p.$w}px;
	flex: none;
`;

const ToolGroup = styled.div`
	position: relative;
	display: flex;
	flex: none;
	align-items: center;
	box-sizing: border-box;
	width: ${p => p.$w}px;
	padding-left: ${p => p.$pad || 10}px;
	border-right: 1px solid #909090;
	border-bottom: 1px solid #909090;
	border-left: 1px solid #fff;
	&::before {
		content: '';
		position: absolute;
		left: 3px;
		top: 4px;
		width: 3px;
		height: 23px;
		border-left: 1px solid #8c8c8c;
		border-bottom: 1px solid #8c8c8c;
		box-shadow: -1px 0 0 #fff;
	}
`;

const ToolSlot = styled.div`
	display: flex;
	flex: none;
	align-items: center;
	justify-content: center;
	width: ${p => (p.$wide ? 26 : 22)}px;
	height: 22px;
`;

const IconBox = styled.svg`
	flex: none;
	width: 22px;
	height: 22px;
	shape-rendering: crispEdges;
`;

const DropMark = styled.span`
	flex: none;
	align-self: center;
	width: 0;
	height: 0;
	margin: 0 1px 0 3px;
	border-top: 3px solid #000;
	border-left: 3px solid transparent;
	border-right: 3px solid transparent;
`;

const Sep = styled.span`
	flex: none;
	width: 1px;
	height: 16px;
	margin: 0 5px;
	background: repeating-linear-gradient(180deg, #000 0 1px, transparent 1px 2px);
`;

const RaisedBtn = styled.div`
	display: flex;
	align-items: center;
	justify-content: center;
	width: 20px;
	height: 20px;
	box-shadow: inset 1px 1px 0 #fff, inset -1px -1px 0 #808080;
`;

const SunkenBtn = styled(RaisedBtn)`
	background: #fff;
	box-shadow: inset 1px 1px 0 #000, inset -1px -1px 0 #e0e0e0;
`;

const SearchLabel = styled.span`
	margin: 0 4px 0 4px;
	font-size: 11px;
	white-space: nowrap;
`;

const SearchField = styled.div`
	width: 115px;
	height: 17px;
	background: #fff;
	box-shadow: inset 1px 1px 0 #000;
`;

const ComboBtn = styled.div`
	display: flex;
	align-items: center;
	justify-content: center;
	width: 17px;
	height: 17px;
	margin: 0 2px 0 3px;
	box-shadow: inset 1px 1px 0 #fff, inset -1px -1px 0 #808080;
`;

const StepField = styled.div`
	width: 59px;
	height: 18px;
	margin-left: 4px;
	padding-right: 2px;
	box-sizing: border-box;
	background: #fff;
	box-shadow: inset 1px 1px 0 #000;
	font-family: "DejaVu Sans Mono", monospace;
	font-size: 12px;
	line-height: 19px;
	text-align: right;
`;

const Spinner = styled.div`
	display: flex;
	flex-direction: column;
	width: 14px;
	margin-right: 5px;
	align-items: center;
	gap: 1px;
	box-shadow: inset -1px -1px 0 #808080;
`;

const ArrowSvg = styled.svg`
	width: 8px;
	height: 8px;
	fill: ${p => (p.$off ? '#a0a0a0' : '#000')};
`;

const Pane = styled.div`
	display: grid;
	grid-template-columns: 253px 121px 958px 17px;
	grid-template-rows: 18px 482px 25px 18px 20px;
	column-gap: 3px;
	margin: 3px 0 0 3px;
	border-top: 1px solid #808080;
	background: linear-gradient(#fff, #fff) no-repeat 0 0 / 1342px 100%;
`;

const NameHead = styled.div`
	display: flex;
	align-items: center;
	padding-left: 10px;
	background: #808080;
`;

const HeadGlyph = styled.svg`
	width: 18px;
	height: 16px;
	margin-right: 1px;
`;

const ValueHead = styled.div`
	padding-right: 5px;
	background: #808080;
	color: #e0e0e0;
	font-size: 11px;
	line-height: 19px;
	text-align: right;
`;

const WaveHead = styled.svg`
	display: block;
	width: 958px;
	height: 18px;
	background: #000;
`;

const SideHead = styled.div`
	background: #808080;
	margin-left: -1px;
`;

const NameList = styled.div`
	margin-top: 3px;
	padding-top: 2px;
	background: #808080;
	border-left: 9px solid #fff;
`;

const SignalRow = styled.div`
	position: relative;
	display: flex;
	align-items: center;
	height: 17px;
	padding-left: 20px;
	background: ${p => (p.$selected ? '#fff' : 'transparent')};
	color: ${p => (p.$selected ? '#000' : '#e2e2e2')};
`;

const Expander = styled.span`
	position: absolute;
	left: 5px;
	top: 4px;
	width: 9px;
	height: 9px;
	background: #f4f4f4;
	box-shadow: inset -1px -1px 0 #a0a0a0;
	color: #000;
	font-size: 11px;
	font-weight: bold;
	line-height: 8px;
	text-align: center;
	&::after {
		content: '';
		position: absolute;
		left: 9px;
		top: 4px;
		width: 6px;
		border-top: 1px dotted #e8e8e8;
	}
`;

const GlyphSvg = styled.svg`
	width: 16px;
	height: 18px;
	flex: none;
`;

const SignalName = styled.span`
	margin: -2px 0 0 4px;
	font-size: 11px;
	letter-spacing: -0.25px;
	white-space: nowrap;
`;

const ValueList = styled.div`
	margin-top: 3px;
	padding-top: 2px;
	background: #808080;
`;

const ValueRow = styled.div`
	height: 17px;
	padding-right: 3px;
	background: ${p => (p.$selected ? '#fff' : 'transparent')};
	color: ${p => (p.$selected ? '#000' : '#e2e2e2')};
	font-size: 11px;
	letter-spacing: -0.3px;
	line-height: 16px;
	text-align: right;
	white-space: nowrap;
`;

const WaveCanvas = styled.svg`
	display: block;
	width: 958px;
	height: 479px;
	margin-top: 3px;
	background: #000;
	font-family: ${FONT};
`;

const DigitalLine = styled.path`
	fill: none;
	stroke: #10e010;
	stroke-width: 1;
`;

const BusLine = styled.path`
	fill: none;
	stroke: #a8f0a8;
	stroke-width: 1;
`;

const BlueLine = styled.path`
	fill: none;
	stroke: #1010f0;
	stroke-width: 1;
`;

const BusText = styled.text`
	fill: #fff;
	font-size: 11px;
	letter-spacing: -0.15px;
`;

const VScroll = styled.div`
	display: flex;
	flex-direction: column;
	margin: 3px 0 0 -1px;
	padding: 2px 3px 3px 2px;
	gap: 1px;
	background: #fff;
`;

const ScrollBtn = styled.div`
	display: flex;
	flex: none;
	align-items: center;
	justify-content: center;
	min-width: 14px;
	height: 14px;
	background: #f0f0f0;
	box-shadow: inset 1px 1px 0 #fff, inset -1px -1px 0 #707070;
`;

const VThumb = styled.div`
	height: 288px;
	background: linear-gradient(#f0f0f0 0 104px, #fdfdfd 104px 114px, #f0f0f0 114px);
	box-shadow: inset -1px -1px 0 #808080;
`;

const VTrack = styled.div`
	flex: 1;
	margin-top: -1px;
	background: #c8c8c8;
`;

const NowCell = styled.div`
	display: flex;
	align-items: center;
	margin-top: 3px;
	height: 22px;
	background: #808080;
`;

const MiniIcons = styled.div`
	display: flex;
	box-sizing: border-box;
	width: 49px;
	padding-left: ${p => (p.$cursor ? 12 : 10)}px;
	gap: 1px;
	flex: none;
`;

const MiniSvg = styled.svg`
	width: 11px;
	height: 11px;
`;

const NowLabel = styled.span`
	margin-left: auto;
	padding-right: 10px;
	color: #e2e2e2;
	font-size: 11px;
`;

const NowValue = styled.div`
	margin-top: 3px;
	height: 22px;
	padding-right: 10px;
	background: #808080;
	color: #e2e2e2;
	font-size: 11px;
	letter-spacing: -0.15px;
	line-height: 22px;
	text-align: right;
`;

const WaveFoot = styled.svg`
	display: block;
	grid-row: span 2;
	width: 958px;
	height: 40px;
	margin-top: 3px;
	background: #000;
	font-family: ${FONT};
`;

const TimeLabel = styled.text`
	fill: #10e010;
	font-size: 11.5px;
	text-anchor: middle;
`;

const CursorLabel = styled.text`
	fill: #ffd040;
	font-size: 11.5px;
	text-anchor: middle;
`;

const SideFoot = styled.div`
	grid-row: span 2;
	margin: 3px 0 0 -1px;
	background: #808080;
`;

const CursorCell = styled.div`
	display: flex;
	align-items: center;
	background: #808080;
	height: 18px;
`;

const CursorName = styled.span`
	flex: 1;
	align-self: stretch;
	padding-right: 10px;
	background: #fff;
	font-size: 11px;
	line-height: 18px;
	text-align: right;
`;

const CursorValue = styled.div`
	height: 18px;
	padding-right: 10px;
	background: #fff;
	font-size: 11px;
	letter-spacing: -0.15px;
	line-height: 18px;
	text-align: right;
`;

const NameScroll = styled.div`
	display: flex;
	align-items: stretch;
	height: 18px;
	margin-top: 2px;
	padding-left: 9px;
	background: #f0f0f0;
	grid-column: 1;
`;

const ValueScroll = styled(NameScroll)`
	padding-left: 1px;
	grid-column: 2;
`;

const WaveScroll = styled(NameScroll)`
	padding: 0 2px 0 1px;
	background: #c8c8c8;
	grid-column: 3;
`;

const FlatBtn = styled.div`
	display: flex;
	align-items: center;
	justify-content: center;
	flex: none;
	width: 17px;
	background: #f0f0f0;
`;

const Hatch = styled.div`
	flex: 1;
	background: repeating-conic-gradient(#fff 0 25%, #ececec 0 50%) 0 0 / 2px 2px;
`;

const SmallThumb = styled.div`
	flex: none;
	width: 7px;
	margin-left: 1px;
	background: #f0f0f0;
	box-shadow: inset -1px -1px 0 #808080, inset 1px 1px 0 #fff;
`;

const TrackPiece = styled.div`
	flex: ${p => (p.$w ? 'none' : 1)};
	width: ${p => p.$w || 0}px;
`;

const WaveThumb = styled(SmallThumb)`
	width: 20px;
	margin: 0;
`;

const SideFootB = styled.div`
	margin: 2px 0 0 -1px;
	background: #808080;
`;

const StatusBar = styled.div`
	position: relative;
	display: flex;
	flex: 1;
	margin-top: 2px;
	padding-left: 3px;
	border-top: 1px solid #c0c0c0;
	background: #f0f0f0;
`;

const StatusPane = styled.div`
	flex: ${p => (p.$w ? 'none' : 1)};
	width: ${p => p.$w || 0}px;
	box-sizing: border-box;
	padding-left: 6px;
	border-left: 1px solid #fff;
	border-right: ${p => (p.$w ? '1px solid #a0a0a0' : '0')};
	margin-right: 2px;
	font-size: 11px;
	letter-spacing: -0.15px;
	line-height: 20px;
	white-space: nowrap;
`;

const SizeGrip = styled.svg`
	position: absolute;
	right: 0;
	bottom: 0;
	width: 10px;
	height: 10px;
`;

const Watermark = styled.div`
	position: absolute;
	left: 598px;
	top: 620px;
	width: 168px;
	display: flex;
	flex-direction: column;
	align-items: center;
	pointer-events: none;
	color: rgba(130, 130, 130, 0.5);
`;

const WatermarkAr = styled.span`
	font-family: "DejaVu Sans", sans-serif;
	font-size: 50px;
	font-weight: bold;
	line-height: 58px;
	direction: rtl;
	transform: scaleX(1.05);
`;

const WatermarkEn = styled.span`
	font-family: "Liberation Sans", sans-serif;
	font-size: 27px;
	line-height: 30px;
	color: rgba(150, 150, 150, 0.18);
`;
